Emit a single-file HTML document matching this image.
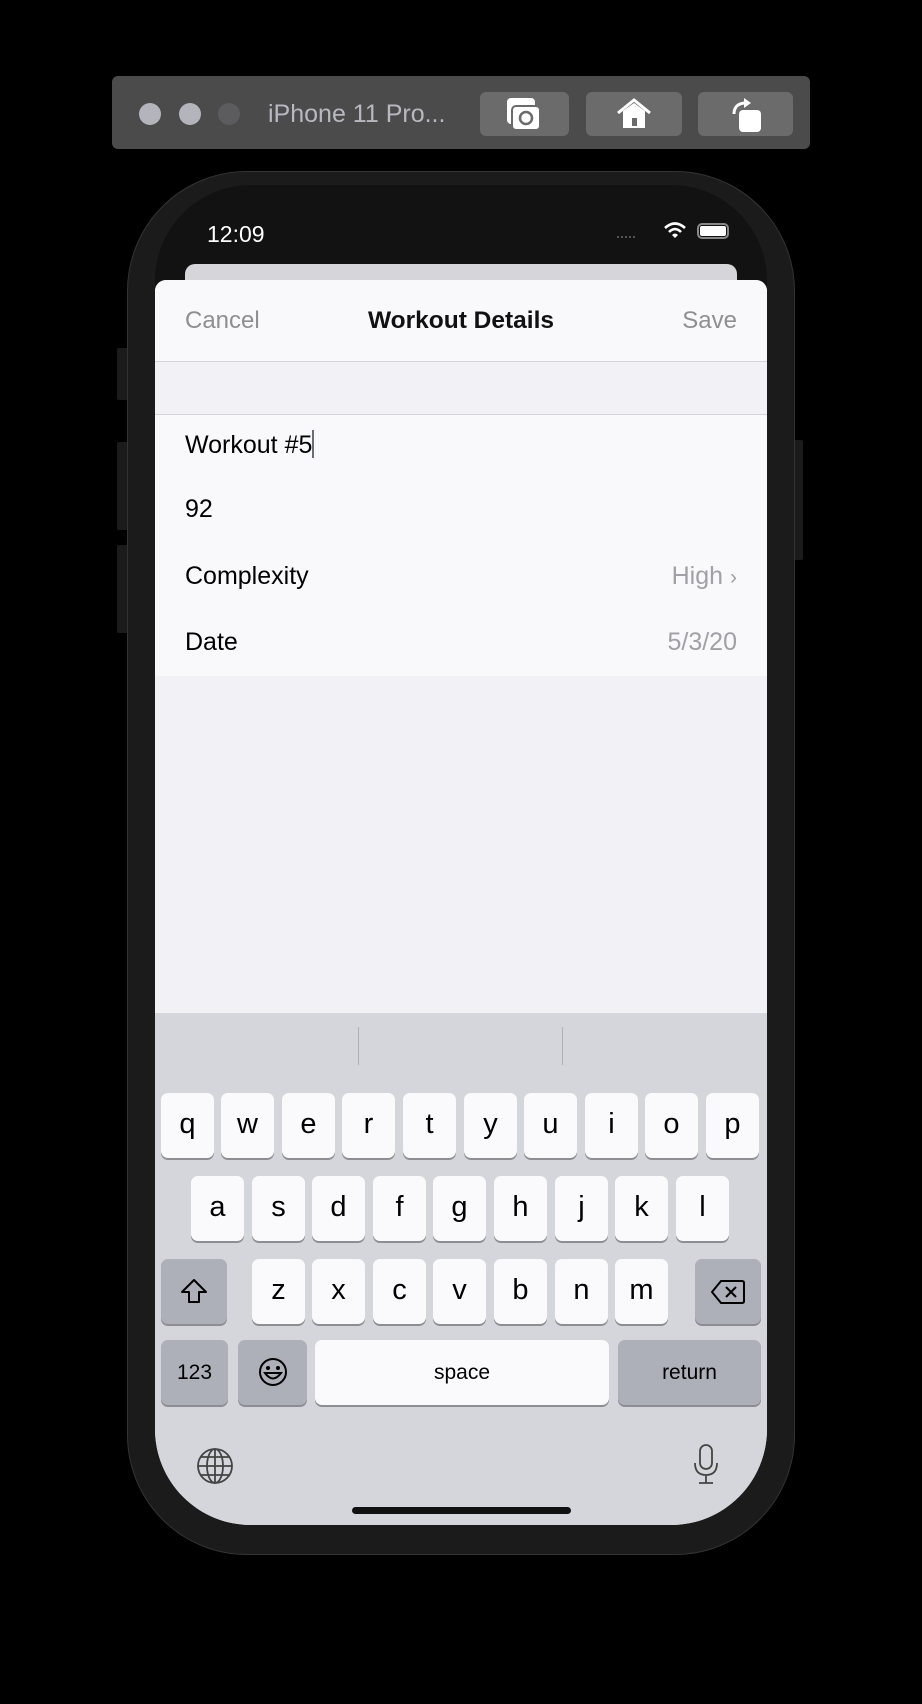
<!DOCTYPE html>
<html><head><meta charset="utf-8"><style>
*{margin:0;padding:0;box-sizing:border-box}
body{width:922px;height:1704px;background:#000;position:relative;overflow:hidden;font-family:"Liberation Sans",sans-serif}
.a{position:absolute}
.tb{left:112px;top:76px;width:698px;height:73px;background:#4b4b4b;border-radius:6px}
.dot{width:22px;height:22px;border-radius:50%;top:103px}
.btn{top:92px;height:44px;background:#6b6b6b;border-radius:6px}
.phone{left:127px;top:171px;width:668px;height:1384px;background:#1b1b1b;border-radius:120px;border:1px solid #333}
.side{background:#1b1b1b;border-radius:2px}
.screen{left:155px;top:185px;width:612px;height:1340px;border-radius:96px;overflow:hidden;background:#121212}
.t{font-size:22px;white-space:nowrap}
.key{position:absolute;height:65px;background:#fafafc;border-radius:7px;box-shadow:0 2px 0 #8d8e93;text-align:center;font-size:29px;color:#000;line-height:63px}
.sp{background:#adb0b8}
.row{position:absolute;left:30px;font-size:25px;color:#000}
</style></head><body>
<div class="a tb"></div>
<div class="a dot" style="left:139px;background:#b4b4bc"></div>
<div class="a dot" style="left:179px;background:#b4b4bc"></div>
<div class="a dot" style="left:218px;background:#5c5c5e"></div>
<div class="a t" style="left:268px;top:100px;color:#b8b8c0;font-size:25px">iPhone 11 Pro...</div>
<div class="a btn" style="left:480px;width:89px"></div>
<div class="a btn" style="left:586px;width:96px"></div>
<div class="a btn" style="left:698px;width:95px"></div>
<svg class="a" style="left:505px;top:96px" width="40" height="38" viewBox="0 0 40 38"><rect x="2" y="2" width="28" height="26" rx="4" fill="#fff"/><rect x="7" y="10" width="28" height="24" rx="4" fill="#fff" stroke="#6b6b6b" stroke-width="2"/><circle cx="21" cy="22" r="6" fill="none" stroke="#6b6b6b" stroke-width="2.5"/></svg>
<svg class="a" style="left:616px;top:97px" width="36" height="34" viewBox="0 0 36 34"><path d="M2 16 L18 3 L34 16" fill="none" stroke="#fff" stroke-width="3"/><path d="M7 14 L18 6 L29 14 V31 H7Z" fill="#fff"/><rect x="16" y="21" width="5" height="8" fill="#6b6b6b"/></svg>
<svg class="a" style="left:726px;top:96px" width="40" height="38" viewBox="0 0 40 38"><path d="M8 18 C8 10 13 7 20 7" fill="none" stroke="#fff" stroke-width="3"/><path d="M18 2 L25 7 L18 12Z" fill="#fff"/><rect x="13" y="14" width="22" height="22" rx="4" fill="#fff"/></svg>

<div class="a side" style="left:117px;top:348px;width:12px;height:52px"></div>
<div class="a side" style="left:117px;top:442px;width:12px;height:88px"></div>
<div class="a side" style="left:117px;top:545px;width:12px;height:88px"></div>
<div class="a side" style="left:793px;top:440px;width:10px;height:120px"></div>
<div class="a phone"></div>
<div class="a screen">
  <div class="a t" style="left:52px;top:36px;color:#fff;font-size:23px">12:09</div>
  <div class="a" style="left:462px;top:51px;width:18px;height:3px;border-top:2px dotted #555"></div>
  <svg class="a" style="left:508px;top:36px" width="24" height="18" viewBox="0 0 24 18"><path d="M2 7 Q12 -2 22 7" fill="none" stroke="#fff" stroke-width="2.6"/><path d="M6 11 Q12 5 18 11" fill="none" stroke="#fff" stroke-width="2.6"/><path d="M9 14 L12 17 L15 14 Q12 11 9 14Z" fill="#fff"/></svg>
  <div class="a" style="left:542px;top:38px;width:32px;height:16px;border:2px solid #888;border-radius:5px;padding:1px"><div style="width:100%;height:100%;background:#fff;border-radius:2px"></div></div>
  <div class="a" style="left:30px;top:79px;width:552px;height:40px;background:#d6d6da;border-radius:10px"></div>
  <div class="a" style="left:0;top:95px;width:612px;height:1300px;background:#f2f2f6;border-radius:11px 11px 0 0;overflow:hidden">
    <div class="a" style="left:0;top:0;width:612px;height:82px;background:#f9f9fb;border-bottom:1px solid #d4d4d8"></div>
    <div class="a t" style="left:30px;top:27px;color:#8e8e93;font-size:24px">Cancel</div>
    <div class="a t" style="left:0;width:612px;text-align:center;top:27px;color:#111;font-size:24.5px;font-weight:bold">Workout Details</div>
    <div class="a t" style="right:30px;top:27px;color:#8e8e93;font-size:24px">Save</div>
    <div class="a" style="left:0;top:134px;width:612px;height:262px;background:#f9f9fb;border-top:1px solid #d4d4d8"></div>
    <div class="row" style="top:150px">Workout #5<span style="display:inline-block;width:2px;height:28px;background:#6a6a80;vertical-align:-5px"></span></div>
    <div class="row" style="top:215px">92</div>
    <div class="row" style="top:282px">Complexity</div>
    <div class="a t" style="right:30px;top:282px;color:#a0a0a6;font-size:25px">High <span style="font-size:21px">&#8250;</span></div>
    <div class="row" style="top:348px">Date</div>
    <div class="a t" style="right:30px;top:348px;color:#a0a0a6;font-size:25px">5/3/20</div>
  </div>
  <div class="a" style="left:0;top:828px;width:612px;height:520px;background:#d5d6db">
    <div class="a" style="left:203px;top:14px;width:1px;height:38px;background:#b0b0b5"></div>
    <div class="a" style="left:407px;top:14px;width:1px;height:38px;background:#b0b0b5"></div>
  </div>
  <div class="a" style="left:0;top:0;width:612px;height:1340px">
    <div class="key" style="left:6px;top:908px;width:53px">q</div>
    <div class="key" style="left:66px;top:908px;width:53px">w</div>
    <div class="key" style="left:127px;top:908px;width:53px">e</div>
    <div class="key" style="left:187px;top:908px;width:53px">r</div>
    <div class="key" style="left:248px;top:908px;width:53px">t</div>
    <div class="key" style="left:309px;top:908px;width:53px">y</div>
    <div class="key" style="left:369px;top:908px;width:53px">u</div>
    <div class="key" style="left:430px;top:908px;width:53px">i</div>
    <div class="key" style="left:490px;top:908px;width:53px">o</div>
    <div class="key" style="left:551px;top:908px;width:53px">p</div>
    <div class="key" style="left:36px;top:991px;width:53px">a</div>
    <div class="key" style="left:97px;top:991px;width:53px">s</div>
    <div class="key" style="left:157px;top:991px;width:53px">d</div>
    <div class="key" style="left:218px;top:991px;width:53px">f</div>
    <div class="key" style="left:278px;top:991px;width:53px">g</div>
    <div class="key" style="left:339px;top:991px;width:53px">h</div>
    <div class="key" style="left:400px;top:991px;width:53px">j</div>
    <div class="key" style="left:460px;top:991px;width:53px">k</div>
    <div class="key" style="left:521px;top:991px;width:53px">l</div>
    <div class="key sp" style="left:6px;top:1074px;width:66px"><svg width="30" height="30" viewBox="0 0 30 30" style="margin-top:17px"><path d="M15 4 L27 16 H20 V26 H10 V16 H3Z" fill="none" stroke="#000" stroke-width="2" stroke-linejoin="round"/></svg></div>
    <div class="key" style="left:97px;top:1074px;width:53px">z</div>
    <div class="key" style="left:157px;top:1074px;width:53px">x</div>
    <div class="key" style="left:218px;top:1074px;width:53px">c</div>
    <div class="key" style="left:278px;top:1074px;width:53px">v</div>
    <div class="key" style="left:339px;top:1074px;width:53px">b</div>
    <div class="key" style="left:400px;top:1074px;width:53px">n</div>
    <div class="key" style="left:460px;top:1074px;width:53px">m</div>
    <div class="key sp" style="left:540px;top:1074px;width:66px"><svg width="36" height="26" viewBox="0 0 36 26" style="margin-top:20px"><path d="M11 2 H32 Q34 2 34 4 V22 Q34 24 32 24 H11 L2 13Z" fill="none" stroke="#000" stroke-width="2" stroke-linejoin="round"/><path d="M16 8 L26 18 M26 8 L16 18" stroke="#000" stroke-width="2"/></svg></div>
    <div class="key sp" style="left:6px;top:1155px;width:67px;font-size:21px;line-height:66px">123</div>
    <div class="key sp" style="left:83px;top:1155px;width:69px"><svg width="32" height="32" viewBox="0 0 32 32" style="margin-top:16px"><circle cx="16" cy="16" r="13" fill="none" stroke="#000" stroke-width="2"/><circle cx="11" cy="12" r="2"/><circle cx="21" cy="12" r="2"/><path d="M8 17 Q16 28 24 17Z" fill="none" stroke="#000" stroke-width="2"/></svg></div>
    <div class="key" style="left:160px;top:1155px;width:294px;font-size:21px;line-height:66px">space</div>
    <div class="key sp" style="left:463px;top:1155px;width:143px;font-size:21px;line-height:66px">return</div>
    <svg class="a" style="left:41px;top:1262px" width="38" height="38" viewBox="0 0 38 38"><g fill="none" stroke="#444" stroke-width="1.8"><circle cx="19" cy="19" r="17"/><ellipse cx="19" cy="19" rx="8" ry="17"/><path d="M19 2 V36 M2 19 H36 M5 10 H33 M5 28 H33"/></g></svg>
    <svg class="a" style="left:538px;top:1258px" width="26" height="42" viewBox="0 0 26 42"><g fill="none" stroke="#444" stroke-width="1.8"><rect x="7" y="2" width="12" height="24" rx="6"/><path d="M2 20 Q2 32 13 32 Q24 32 24 20 M13 32 V40 M6 40 H20"/></g></svg>
    <div class="a" style="left:197px;top:1322px;width:219px;height:7px;border-radius:4px;background:#111"></div>
  </div>
</div>
</body></html>
